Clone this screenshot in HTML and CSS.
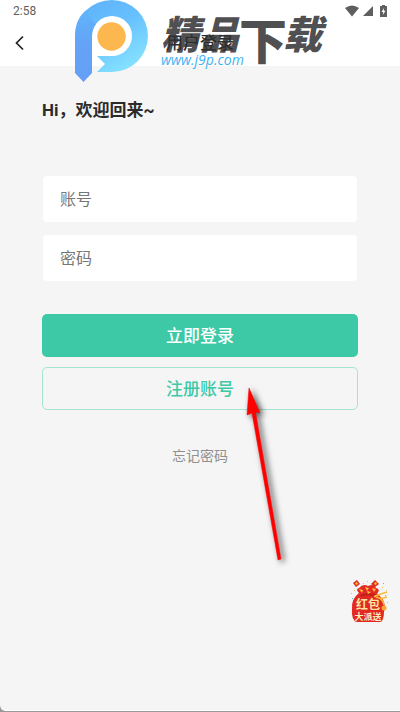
FILE: index.html
```html
<!DOCTYPE html>
<html lang="zh-CN">

<head>
	<meta charset="UTF-8">
	<meta name="viewport" content="width=device-width, initial-scale=1">
	<title>用户登录</title>
	<link rel="stylesheet" href="styles.css">
</head>

<body>
	<div class="screen">
		<header class="header">
			<div class="status-bar">
				<span class="time">2:58</span>
				<div class="status-icons">
					<svg width="14" height="12" viewBox="0 0 14 12"><path d="M0 3Q7-2 14 3L7 11.500Z" fill="#5f5f5f"/></svg>
					<svg width="10" height="12" viewBox="0 0 10 12"><path d="M10 1V11H0Z" fill="#5f5f5f"/></svg>
					<svg width="7" height="12" viewBox="0 0 7 12"><path d="M2 0H5V1H7V12H0V1H2Z" fill="#5f5f5f"/><path d="M4 3L1.500 7H3.200L2.800 10L5.500 5.800H3.800Z" fill="#fff"/></svg>
				</div>
			</div>
			<nav class="nav-bar">
				<a href="#" class="back" aria-label="返回">
					<svg width="10" height="16" viewBox="0 0 10 16"><path d="M9 1.500L2.500 8L9 14.500" fill="none" stroke="#222" stroke-width="1.700"/></svg>
				</a>
				<h1 class="title">用户登录</h1>
			</nav>
			<div class="brand">
				<svg class="brand-logo" width="74" height="82" viewBox="0 0 74 82">
					<defs>
						<linearGradient id="ring" x1="0" y1="0" x2="0.600" y2="1">
							<stop offset="0" stop-color="#5eb0fa"/>
							<stop offset="0.500" stop-color="#66bffe"/>
							<stop offset="1" stop-color="#84e0ff"/>
						</linearGradient>
						<linearGradient id="stem" x1="0" y1="0" x2="0" y2="1">
							<stop offset="0" stop-color="#60b4fb"/>
							<stop offset="0.450" stop-color="#64a3f7"/>
							<stop offset="1" stop-color="#659ff6"/>
						</linearGradient>
					</defs>
					<path d="M0 36A37 36 0 0 1 37 0A36 36 0 0 1 37 72H22L30 64L22 56H37A20 20 0 1 0 17 36Z" fill="url(#ring)"/>
					<path d="M0 36Q0 20 10 11L21 24Q17 29 17 36V73L8.500 82L0 73Z" fill="url(#stem)"/>
					<circle cx="36.500" cy="36.500" r="14.200" fill="#fcb74f"/>
				</svg>
				<div class="brand-text">
					<div class="brand-name"><span>精品</span><span class="brand-tall">下</span><span>载</span></div>
					<div class="brand-url">www.j9p.com</div>
				</div>
			</div>
		</header>

		<main class="content">
			<h2 class="greeting">Hi，欢迎回来~</h2>
			<form class="login-form">
				<input class="field" type="text" placeholder="账号" aria-label="账号">
				<input class="field" type="password" placeholder="密码" aria-label="密码">
				<button class="btn btn-login" type="button">立即登录</button>
				<div class="register">
					<button class="btn btn-register" type="button">注册账号</button>
					<svg class="pointer" width="50" height="190" viewBox="0 0 50 190">
						<path d="M8 7L19 32L14.500 31L40 178L37 179L11 32L6 34Z" fill="#f00" stroke="#f00" stroke-width="0.500"/>
					</svg>
				</div>
			</form>
			<a href="#" class="forgot">忘记密码</a>
		</main>

		<a href="#" class="promo" aria-label="红包大派送">
			<svg width="40" height="46" viewBox="0 0 40 46">
				<path d="M3 5L7 2L10 6L6 9ZM21 6L25 2L29 6L25 9Z" fill="#d92c21"/>
				<path d="M5 5L7 4L8 6L6 7ZM24 5L26 4L27 6L25 7Z" fill="#fbbb3a"/>
				<path d="M9 15Q5 11 9 10Q13 5 18 8Q24 5 26 10Q31 11 27 16Q37 22 34 34Q34 44 29 44H7Q1 42 2 31Q1 21 9 15Z" fill="#e52a24"/>
				<path d="M10 17Q18 13 28 17L26 19Q18 16 11 19Z" fill="#c4211c"/>
				<path d="M9 11l4 1l-1 3zM15 9l4 1l-2 3zM22 10l4 1l-2 3zM17 13l4 1l-3 2z" fill="#ffb93f"/>
				<path d="M24 18Q29 22 37 19M25 18Q31 16 37 14M27 19Q33 21 34 27" fill="none" stroke="#f6be36" stroke-width="1.500"/>
				<circle cx="34" cy="30" r="2.500" fill="#f4a62e"/>
				<path d="M1 15h1v1H1zM4 12h1v1H4zM13 5h1v1h-1zM17 3h1v1h-1zM32 9h1v1h-1zM36 12h1v1h-1zM37 24h1v1h-1z" fill="#f2b84b"/>
				<path d="M2 20h1v1H2zM33 5h1v1h-1zM35 17h1v1h-1z" fill="#66b8d8"/>
				<text class="promo-main" x="18" y="31" text-anchor="middle">红包</text>
				<text class="promo-sub" x="18" y="42" text-anchor="middle">大派送</text>
			</svg>
		</a>
	</div>
</body>

</html>
```
FILE: styles.css
```css
* {
	box-sizing: border-box;
}

body {
	margin: 0;
	background-color: #9a9a9a;
	color: #2b2b2b;
	font-family: Roboto, "Noto Sans CJK SC", sans-serif;
}

a {
	color: inherit;
	text-decoration: none;
}

svg {
	display: block;
}

.screen {
	position: relative;
	min-height: calc(100vh - 1px);
	border-bottom: 1px solid #fff;
	border-bottom-left-radius: 6px;
	background-color: #f5f5f5;
}

/* header */
.header {
	position: relative;
	height: 66px;
	background-color: #fff;
}

.status-bar {
	display: flex;
	align-items: center;
	justify-content: space-between;
	height: 22px;
	padding: 0 13px;
}

.time {
	color: #5f5f5f;
	font-size: 12px;
}

.status-icons {
	display: flex;
	gap: 4px;
}

.status-icons svg:last-child {
	margin-left: 3px;
}

.nav-bar {
	display: flex;
	align-items: center;
	justify-content: center;
	height: 42px;
}

.back {
	position: absolute;
	left: 14px;
}

.title {
	margin: 0;
	font-size: 17px;
	font-weight: 500;
	line-height: 24px;
}

.brand {
	position: absolute;
	top: 0;
	left: 75px;
	display: flex;
	gap: 12px;
	pointer-events: none;
}

.brand-text {
	padding-top: 12px;
}

.brand-name {
	display: flex;
	height: 40px;
	color: rgba(48, 48, 50, 0.85);
	font-family: "Noto Sans CJK SC", sans-serif;
	font-size: 39px;
	font-style: italic;
	font-weight: 900;
	line-height: 40px;
	white-space: nowrap;
}

.brand-tall {
	margin-right: -4px;
	font-size: 48px;
	font-style: normal;
	line-height: 52px;
}

.brand-url {
	color: #3fb2f2;
	font-family: "Open Sans", sans-serif;
	font-size: 14px;
	font-style: italic;
	line-height: 16px;
}

/* login */
.content {
	padding: 32px 42px 0;
}

.greeting {
	margin: 0;
	font-size: 17px;
	font-weight: 700;
	line-height: 24px;
}

.login-form {
	display: flex;
	flex-direction: column;
	margin-top: 54px;
}

.field {
	height: 46px;
	margin: 0 1px 13px;
	padding: 0 17px;
	border: 0;
	border-radius: 4px;
	background-color: #fff;
	font: inherit;
	font-size: 16px;
}

.field::placeholder {
	color: #777;
}

.btn {
	width: 100%;
	height: 43px;
	padding: 0 0 2px;
	border: 0;
	border-radius: 5px;
	font: inherit;
	font-size: 17px;
	font-weight: 500;
}

.btn-login {
	margin-top: 20px;
	background-color: #3dc9a5;
	color: #fff;
}

.register {
	position: relative;
	margin-top: 10px;
}

.btn-register {
	border: 1px solid #a5e3d2;
	background-color: transparent;
	color: #3dc9a5;
}

/* hint arrow over the register button */
.pointer {
	position: absolute;
	top: 14px;
	left: 63%;
	filter: drop-shadow(3px 2px 3px rgba(0, 0, 0, 0.7));
	pointer-events: none;
}

.forgot {
	display: block;
	width: max-content;
	margin: 36px auto 0;
	color: #8f8f8f;
	font-size: 14px;
	line-height: 20px;
}

/* red packet, floats bottom right */
.promo {
	position: absolute;
	right: 10px;
	bottom: 86px;
}

.promo text {
	font-family: "Noto Sans CJK SC", sans-serif;
	font-weight: 700;
	stroke: #d5251c;
	stroke-width: 1px;
	paint-order: stroke;
}

.promo-main {
	fill: #ffe2a0;
	font-size: 12px;
}

.promo-sub {
	fill: #fff0c4;
	font-size: 9px;
}
```
